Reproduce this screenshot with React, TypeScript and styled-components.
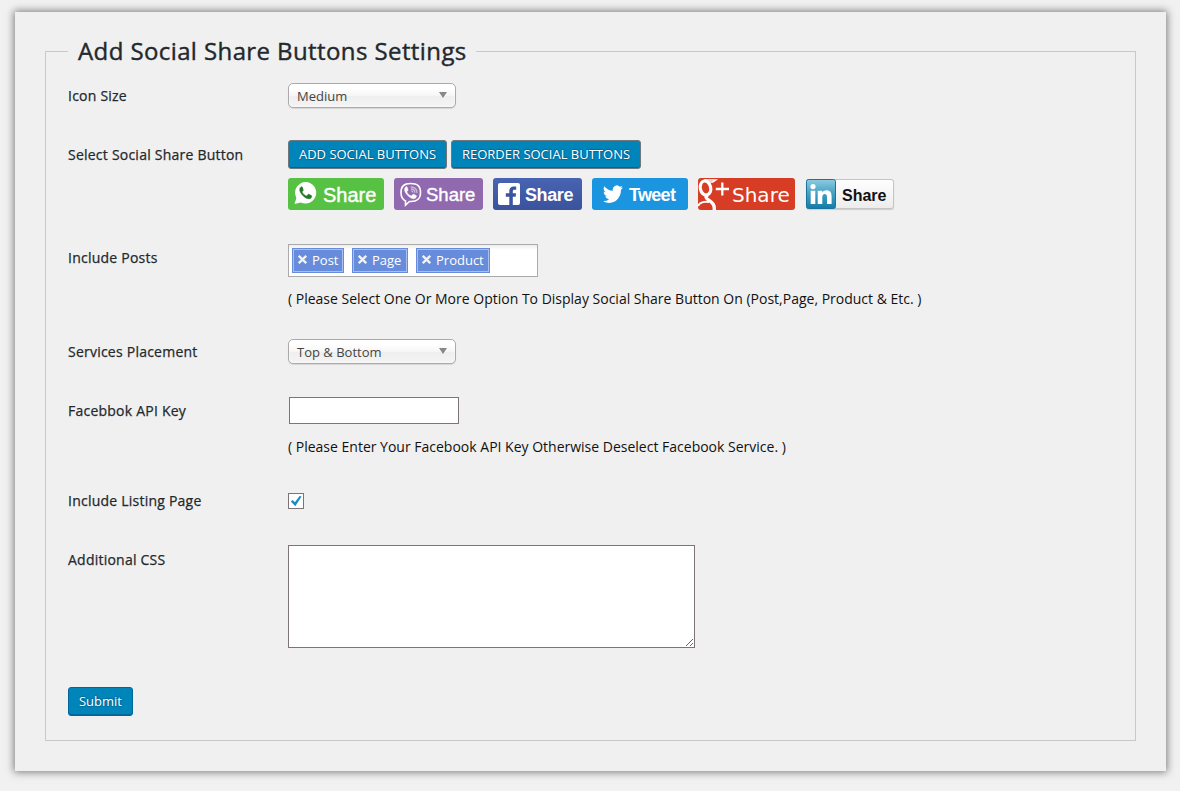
import React, { useState } from 'react';
import styled, { createGlobalStyle } from 'styled-components';

const GlobalStyle = createGlobalStyle`
  *, *::before, *::after { box-sizing: border-box; }
  body {
    margin: 0;
    background: #f1f1f1;
    color: #23282d;
    font: 14px/20px 'Open Sans', sans-serif;
  }
  #root { display: flow-root; min-height: 791px; }
`;

const Card = styled.main`
  width: 1151px;
  height: 759px;
  margin: 12px 0 0 15px;
  padding: 22px 30px 0;
  background: #f0f0f0;
  box-shadow: 0 0 8px 1px rgba(0, 0, 0, 0.5);
`;

const Fieldset = styled.fieldset`
  height: 707px;
  margin: 0;
  padding: 0 22px;
  border: 1px solid #c9c9c9;
`;

const Legend = styled.legend`
  width: 408px;
  height: 35px;
  padding: 0 10px;
  font-size: 24px;
  line-height: 33px;
  letter-spacing: 0.4px;
  -webkit-text-stroke: 0.4px #23282d;
  white-space: nowrap;
`;

const Row = styled.div<{ $height: number }>`
  display: grid;
  grid-template-columns: 220px 1fr;
  height: ${(p) => p.$height}px;

  &:first-of-type { margin-top: -1px; }
`;

const Label = styled.label`
  padding-top: 18px;
  letter-spacing: 0.23px;
  -webkit-text-stroke: 0.25px #23282d;
`;

const Field = styled.div<{ $top: number }>`
  padding-top: ${(p) => p.$top}px;
`;

const Help = styled.p<{ $top: number }>`
  margin: ${(p) => p.$top}px 0 0;
  color: #111;
  white-space: nowrap;
`;

const Select = styled.div`
  display: flex;
  align-items: center;
  justify-content: space-between;
  width: 168px;
  height: 25px;
  padding: 1px 8px 0;
  border: 1px solid #aaa;
  border-radius: 5px;
  background: linear-gradient(#fff 20%, #f6f6f6 50%, #eee 52%, #f4f4f4 100%);
  box-shadow: 0 0 3px #fff inset, 0 1px 1px rgba(0, 0, 0, 0.1);
  color: #444;
  font-size: 13px;
`;

const Arrow = styled.span`
  margin-top: -2px;
  border: 4px solid transparent;
  border-top: 6px solid #888;
  border-bottom: 0;
`;

const ButtonBar = styled.div`
  display: flex;
  gap: 4px;
`;

const Button = styled.button<{ $width: number; $edge: string }>`
  width: ${(p) => p.$width}px;
  height: 29px;
  padding: 0 0 1px;
  border: 1px solid ${(p) => p.$edge};
  border-radius: 3px;
  background: #0085ba;
  box-shadow: inset 0 -1px 0 #006799;
  color: #fff;
  font: 13px/26px 'Open Sans', sans-serif;
  text-shadow: 0 -1px 1px #006799, 1px 0 1px #006799, 0 1px 1px #006799;
  white-space: nowrap;
`;

const ShareBar = styled.div`
  display: flex;
  margin-top: 9px;
`;

const Share = styled.div<{ $width: number; $bg: string; $pad?: number; $gap?: number }>`
  display: flex;
  align-items: center;
  width: ${(p) => p.$width}px;
  height: 32px;
  margin-right: ${(p) => p.$gap ?? 10}px;
  padding-left: ${(p) => p.$pad ?? 5}px;
  border-radius: 3px;
  background: ${(p) => p.$bg};
  overflow: hidden;

  svg { flex: none; display: block; }
`;

const ShareText = styled.span<{ $size: number; $left: number; $bold?: boolean; $space?: number; $family?: string }>`
  margin-left: ${(p) => p.$left}px;
  padding-top: 2px;
  color: #fff;
  font-family: ${(p) => p.$family ?? "'Liberation Sans'"}, sans-serif;
  font-size: ${(p) => p.$size}px;
  font-weight: ${(p) => (p.$bold ? 700 : 400)};
  letter-spacing: ${(p) => p.$space ?? 0}px;
  line-height: 30px;
  -webkit-text-stroke: ${(p) => (p.$bold || p.$family ? 0 : 0.4)}px #fff;
`;

const LinkedIn = styled.div`
  display: flex;
  width: 88px;
  height: 30px;
  margin-top: 1px;
  border-radius: 3px;
  background: linear-gradient(#fff, #ececec);
  box-shadow: inset 0 0 0 1px #c4c4c4, 0 1px 1px #ccc;

  svg { display: block; flex: none; }
  span { color: #111; padding-top: 2px; }
`;

const Tags = styled.div`
  display: flex;
  gap: 8px;
  width: 250px;
  height: 33px;
  padding: 3px;
  border: 1px solid #aaa;
  background: linear-gradient(#eee 1%, #fff 15%);
`;

const Tag = styled.div<{ $width: number }>`
  display: flex;
  align-items: center;
  width: ${(p) => p.$width}px;
  height: 25px;
  padding: 0 0 2px 5px;
  border: 1px solid #668cdb;
  background: #668cdb;
  box-shadow: inset 0 0 0 1px #a9c0ee;
  color: #fff;
  font-size: 13px;

  svg { margin-right: 5px; flex: none; }
`;

const TextInput = styled.input`
  display: block;
  width: 170px;
  height: 27px;
  margin-left: 1px;
  padding: 3px 5px;
  border: 1px solid #7e7478;
  background: #fff;
  outline: 0;
`;

const Checkbox = styled.button`
  display: flex;
  align-items: center;
  justify-content: center;
  width: 16px;
  height: 16px;
  padding: 0;
  border: 1px solid #7e7478;
  background: #fff;
`;

const TextArea = styled.textarea`
  display: block;
  width: 407px;
  height: 103px;
  border: 1px solid #7e7478;
  border-radius: 0;
  background: #fff;
  outline: 0;
  resize: both;
`;

const Footer = styled.div`
  padding-top: 28px;
`;

const tags = [
  { name: 'Post', width: 52 },
  { name: 'Page', width: 56 },
  { name: 'Product', width: 74 },
];

const HANDSET =
  'M7.3 5.2c-.4 0-1 .3-1.4.8-1.3 1.5-.7 4 .9 6.200 1.800 2.500 4.200 4.500 6.800 5.100 1.500.3 3.100-.5 3.500-1.900.2-.7.1-1.100-.2-1.300l-2.600-1.300c-.4-.1-.7 0-.9.3l-1 1.200c-.2.2-.5.2-.8.1-1.700-.8-3-1.900-3.900-3.600-.2-.3-.1-.5.1-.7l.8-1c.2-.3.2-.5.1-.8L7.900 5.600c-.1-.3-.3-.4-.6-.4z';

const WhatsAppIcon = () => (
  <svg width="24" height="24" viewBox="0 .5 24 24">
    <path d="M12.800 .6a10.700 10.700 0 0 0-9.400 15.900L1.500 22.500l6.300-1.600A10.700 10.700 0 1 0 12.800 .6z" fill="#fff" />
    <path d={HANDSET} transform="translate(1.500 0)" fill="#25752a" stroke="#25752a" strokeWidth=".5" />
  </svg>
);

const ViberIcon = () => (
  <svg width="24" height="26" viewBox="0 0 24 26" fill="none" stroke="#fff">
    <path
      d="M11.500 2.500C5 2.500 2 5 2 11.500c0 4.500 1.300 7.200 4.500 8.400v4.300l4-3.700h1C18.500 20.500 21.500 18 21.500 11.300 21.500 5 18.500 2.500 11.500 2.500z"
      strokeWidth="1.600"
    />
    <path d={HANDSET} transform="translate(.3 .4)" fill="#fff" strokeWidth=".4" />
    <path d="M11.700 6c4 0 6.300 2.200 6.300 6M11.900 8c2.700.1 4 1.500 4 3.800M12.200 9.800c1 .1 1.600.7 1.600 1.700" strokeWidth="1.300" opacity=".55" />
  </svg>
);

const FacebookIcon = () => (
  <svg width="22" height="22" viewBox="0 0 22 22">
    <rect width="22" height="22" rx="2" fill="#fff" />
    <path d="M11.300 22v-8.300H7.800v-3.400h3.500V8.100c0-3 1.700-4.500 4.400-4.500h2.500v3.200h-1.700c-1.300 0-1.700.6-1.700 1.600v1.900h3.300l-.5 3.400h-2.800V22z" fill="#3a559f" />
  </svg>
);

const TwitterIcon = () => (
  <svg width="20" height="18" viewBox="0 1.800 24 20" preserveAspectRatio="none" fill="#fff">
    <path d="M23.950 4.570a10 10 0 0 1-2.820.770 4.960 4.960 0 0 0 2.160-2.720c-.950.550-2 .960-3.130 1.190a4.920 4.920 0 0 0-8.380 4.480C7.690 8.090 4.070 6.130 1.640 3.160a4.920 4.920 0 0 0 1.520 6.570 4.900 4.900 0 0 1-2.230-.610v.060a4.920 4.920 0 0 0 3.950 4.830 5 5 0 0 1-2.210.080 4.940 4.940 0 0 0 4.600 3.420A9.870 9.870 0 0 1 0 19.540a14 14 0 0 0 7.550 2.210c9.050 0 14-7.500 14-13.980 0-.210 0-.420-.020-.630a9.900 9.900 0 0 0 2.420-2.570z" />
  </svg>
);

const GooglePlusIcon = () => (
  <svg width="32" height="32" viewBox="0 0 32 32" fill="none" stroke="#fff">
    <ellipse cx="7.500" cy="10" rx="5.200" ry="7.200" strokeWidth="3.200" transform="rotate(-12 7.500 10)" />
    <path d="M6.500 2h11l-2.700 2h-3.500" strokeWidth="1.700" />
    <path d="M10 16.500c-3 2-2.500 3.500.8 5.600 4.200 2.800 6 5 5.400 10.400" strokeWidth="3.400" />
    <path d="M11 24C6 23.200 1.500 24.800 0 28" strokeWidth="2" />
    <path d="M24.300 4.500v13M17.800 11h13.200" strokeWidth="2.300" />
  </svg>
);

const LinkedInIcon = () => (
  <svg width="30" height="30" viewBox="0 0 30 30">
    <defs>
      <linearGradient id="linkedin-blue" x1="0" y1="0" x2="0" y2="1">
        <stop offset="0" stopColor="#8fcbe0" />
        <stop offset=".5" stopColor="#409fc3" />
        <stop offset="1" stopColor="#127ba8" />
      </linearGradient>
    </defs>
    <rect x=".5" y=".5" width="29" height="29" rx="2" fill="url(#linkedin-blue)" stroke="#1c7399" />
    <g fill="#fff">
      <circle cx="7" cy="7.600" r="2.600" />
      <path d="M4.700 11.700h4.600V25H4.700zM11.700 11.700h4.500v1.900c.8-1.400 2.200-2.300 4.200-2.300 3.900 0 5.200 2.400 5.200 6.300V25H21v-6.700c0-2-.4-3.300-2.200-3.300s-2.500 1.400-2.500 3.300V25h-4.600z" />
    </g>
  </svg>
);

export default function App() {
  const [checked, setChecked] = useState(true);

  return (
    <>
      <GlobalStyle />
      <Card>
        <Fieldset>
          <Legend>Add Social Share Buttons Settings</Legend>

          <Row $height={59}>
            <Label>Icon Size</Label>
            <Field $top={15}>
              <Select>Medium<Arrow /></Select>
            </Field>
          </Row>

          <Row $height={103}>
            <Label>Select Social Share Button</Label>
            <Field $top={13}>
              <ButtonBar>
                <Button $width={159} $edge="#70777b">ADD SOCIAL BUTTONS</Button>
                <Button $width={190} $edge="#70777b">REORDER SOCIAL BUTTONS</Button>
              </ButtonBar>
              <ShareBar>
                <Share $width={96} $bg="#57c143">
                  <WhatsAppIcon />
                  <ShareText $size={20} $left={6}>Share</ShareText>
                </Share>
                <Share $width={89} $bg="#9069ae">
                  <ViberIcon />
                  <ShareText $size={18.5} $left={3} $space={0}>Share</ShareText>
                </Share>
                <Share $width={89} $bg="linear-gradient(#4764b2, #3b529c)">
                  <FacebookIcon />
                  <ShareText $size={18} $left={5} $bold $space={-0.4}>Share</ShareText>
                </Share>
                <Share $width={96} $bg="#1b95e0" $pad={11}>
                  <TwitterIcon />
                  <ShareText $size={18} $left={6} $bold $space={-0.7}>Tweet</ShareText>
                </Share>
                <Share $width={97} $bg="#d73d24" $pad={0} $gap={11}>
                  <GooglePlusIcon />
                  <ShareText $size={20} $left={2} $family="'DejaVu Sans'">Share</ShareText>
                </Share>
                <LinkedIn>
                  <LinkedInIcon />
                  <ShareText $size={16} $left={6} $bold>Share</ShareText>
                </LinkedIn>
              </ShareBar>
            </Field>
          </Row>

          <Row $height={94}>
            <Label>Include Posts</Label>
            <Field $top={14}>
              <Tags>
                {tags.map((tag) => (
                  <Tag key={tag.name} $width={tag.width}>
                    <svg width="9" height="9" viewBox="0 0 9 9" stroke="#f0f2fa" strokeWidth="2.300">
                      <path d="M.8.8l7.400 7.400M8.200.8L.8 8.200" />
                    </svg>
                    {tag.name}
                  </Tag>
                ))}
              </Tags>
              <Help $top={12}>
                ( Please Select One Or More Option To Display Social Share Button On (Post,Page, Product &amp; Etc. )
              </Help>
            </Field>
          </Row>

          <Row $height={59}>
            <Label>Services Placement</Label>
            <Field $top={15}>
              <Select>Top &amp; Bottom<Arrow /></Select>
            </Field>
          </Row>

          <Row $height={90}>
            <Label htmlFor="api-key">Facebbok API Key</Label>
            <Field $top={14}>
              <TextInput id="api-key" />
              <Help $top={13}>
                ( Please Enter Your Facebook API Key Otherwise Deselect Facebook Service. )
              </Help>
            </Field>
          </Row>

          <Row $height={59}>
            <Label>Include Listing Page</Label>
            <Field $top={20}>
              <Checkbox role="checkbox" aria-checked={checked} onClick={() => setChecked(!checked)}>
                {checked && (
                  <svg width="12" height="12" viewBox="0 0 12 12">
                    <path d="M.8 6.400l1.900-1.500 2.200 2.300L9.600 1l2 .6L5.300 11.300z" fill="#1e8cbe" />
                  </svg>
                )}
              </Checkbox>
            </Field>
          </Row>

          <Row $height={127}>
            <Label htmlFor="css">Additional CSS</Label>
            <Field $top={13}>
              <TextArea id="css" />
            </Field>
          </Row>

          <Footer>
            <Button $width={65} $edge="#006799">Submit</Button>
          </Footer>
        </Fieldset>
      </Card>
    </>
  );
}
